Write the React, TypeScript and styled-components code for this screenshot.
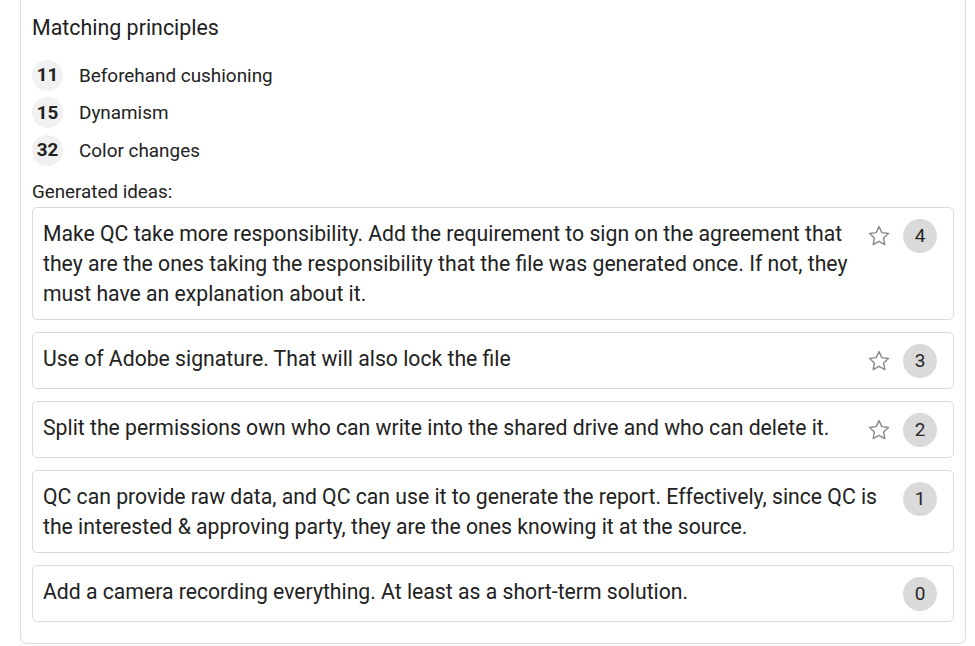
import styled, { createGlobalStyle } from "styled-components";

interface Principle {
  id: number;
  name: string;
}

interface Idea {
  text: string;
  votes: number;
  starrable: boolean;
}

const principles: Principle[] = [
  { id: 11, name: "Beforehand cushioning" },
  { id: 15, name: "Dynamism" },
  { id: 32, name: "Color changes" },
];

const ideas: Idea[] = [
  {
    text: "Make QC take more responsibility. Add the requirement to sign on the agreement that they are the ones taking the responsibility that the file was generated once. If not, they must have an explanation about it.",
    votes: 4,
    starrable: true,
  },
  { text: "Use of Adobe signature. That will also lock the file", votes: 3, starrable: true },
  {
    text: "Split the permissions own who can write into the shared drive and who can delete it.",
    votes: 2,
    starrable: true,
  },
  {
    text: "QC can provide raw data, and QC can use it to generate the report. Effectively, since QC is the interested & approving party, they are the ones knowing it at the source.",
    votes: 1,
    starrable: false,
  },
  { text: "Add a camera recording everything. At least as a short-term solution.", votes: 0, starrable: false },
];

const GlobalStyle = createGlobalStyle`
  html, body {
    margin: 0;
    padding: 0;
    background: #ffffff;
  }
  body {
    font-family: Roboto, "Noto Sans", "Liberation Sans", sans-serif;
    color: #212121;
  }
`;

const Page = styled.div`
  padding-left: 20px;
  width: 946px;
`;

const Panel = styled.section`
  border: 1px solid #dedede;
  border-top: none;
  border-radius: 0 0 7px 7px;
  box-shadow: 0 1px 2px rgba(0, 0, 0, 0.06);
  padding: 14px 11px 21px;
  display: flex;
  flex-direction: column;
`;

const Heading = styled.h2`
  margin: 0;
  font-size: 21.4px;
  line-height: 28px;
  font-weight: 400;
  color: #212121;
`;

const PrincipleList = styled.ul`
  list-style: none;
  margin: 18px 0 0;
  padding: 0;
  display: flex;
  flex-direction: column;
  gap: 7.5px;
`;

const PrincipleRow = styled.li`
  display: flex;
  align-items: center;
  gap: 16px;
  height: 30px;
`;

const PrincipleNumber = styled.span`
  width: 31px;
  height: 31px;
  border-radius: 50%;
  background: #f1f1f1;
  display: flex;
  align-items: center;
  justify-content: center;
  font-size: 18.8px;
  font-weight: 700;
  color: #222;
`;

const PrincipleName = styled.span`
  font-size: 18.9px;
  color: #222;
`;

const SubHeading = styled.div`
  margin-top: 15px;
  font-size: 18.8px;
  line-height: 24px;
  color: #222;
`;

const IdeaList = styled.div`
  margin-top: 3px;
  display: flex;
  flex-direction: column;
  gap: 12px;
`;

const IdeaCard = styled.div`
  border: 1px solid #dcdcdc;
  border-radius: 5px;
  padding: 10px 16px 10px 10px;
  display: flex;
  align-items: flex-start;
  gap: 14px;
`;

const IdeaText = styled.p`
  flex: 1;
  margin: 0;
  padding-top: 1px;
  font-size: 21.2px;
  line-height: 30px;
  color: #222;
`;

const Actions = styled.div`
  display: flex;
  align-items: center;
  gap: 12px;
  height: 35px;
`;

const StarButton = styled.button`
  border: none;
  background: none;
  padding: 0;
  width: 24px;
  height: 24px;
  display: flex;
  align-items: center;
  justify-content: center;
  cursor: pointer;
`;

const VoteBadge = styled.span`
  width: 34px;
  height: 34px;
  border-radius: 50%;
  background: #dadada;
  display: flex;
  align-items: center;
  justify-content: center;
  font-size: 19px;
  color: #262626;
`;

const StarIcon = () => (
  <svg width="24" height="24" viewBox="0 0 24 24" fill="none">
    <path
      d="M12 2.6l2.85 6.05 6.6.8-4.87 4.55 1.25 6.55L12 17.3l-5.83 3.25 1.25-6.55L2.55 9.45l6.6-.8z"
      stroke="#8a8a8a"
      strokeWidth="1.4"
      strokeLinejoin="round"
    />
  </svg>
);

export default function App() {
  return (
    <Page>
      <GlobalStyle />
      <Panel>
        <Heading>Matching principles</Heading>
        <PrincipleList>
          {principles.map((p) => (
            <PrincipleRow key={p.id}>
              <PrincipleNumber>{p.id}</PrincipleNumber>
              <PrincipleName>{p.name}</PrincipleName>
            </PrincipleRow>
          ))}
        </PrincipleList>
        <SubHeading>Generated ideas:</SubHeading>
        <IdeaList>
          {ideas.map((idea, i) => (
            <IdeaCard key={i}>
              <IdeaText>{idea.text}</IdeaText>
              <Actions>
                {idea.starrable && (
                  <StarButton aria-label="Vote">
                    <StarIcon />
                  </StarButton>
                )}
                <VoteBadge>{idea.votes}</VoteBadge>
              </Actions>
            </IdeaCard>
          ))}
        </IdeaList>
      </Panel>
    </Page>
  );
}
